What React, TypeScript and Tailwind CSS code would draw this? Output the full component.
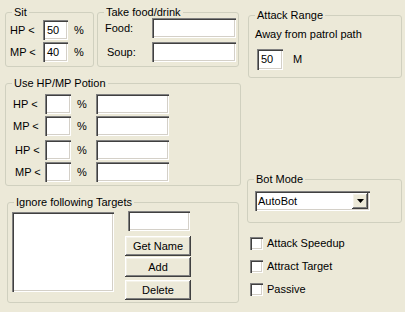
import type { ReactNode } from 'react';
import clsx from 'clsx';

const sunken =
  'bg-white shadow-[inset_1px_1px_0_#808080,inset_2px_2px_0_#404040,inset_-1px_-1px_0_#ffffff,inset_-2px_-2px_0_#d4d0c8]';
const raised =
  'bg-[#ECE9D8] shadow-[inset_-1px_-1px_0_#404040,inset_1px_1px_0_#ffffff,inset_-2px_-2px_0_#808080,inset_2px_2px_0_#f4f2e8]';

const Group = ({
  title,
  className,
  children,
}: {
  title: string;
  className?: string;
  children: ReactNode;
}) => (
  <fieldset
    className={clsx('m-0 p-0 border border-[#D0D0BF] rounded-[3px]', className)}
  >
    <legend className="ml-[6px] px-[2px] leading-[12px]">{title}</legend>
    {children}
  </fieldset>
);

const Input = ({ className, value }: { className: string; value?: string }) => (
  <div className={clsx(sunken, 'pl-[4px] flex items-center', className)}>{value}</div>
);

const Button = ({ label, className }: { label: string; className?: string }) => (
  <div
    className={clsx(
      raised,
      'w-[66px] h-[20px] flex items-center justify-center',
      className
    )}
  >
    {label}
  </div>
);

const potionRows = [
  { label: 'HP <', gap: '', shift: '' },
  { label: 'MP <', gap: 'mt-[2px]', shift: '' },
  { label: 'HP <', gap: 'mt-[4px]', shift: 'pl-[2px]' },
  { label: 'MP <', gap: 'mt-[2px]', shift: 'pl-[2px]' },
];

export default function App() {
  return (
    <div className="w-[405px] h-[312px] overflow-hidden bg-[#ECE9D8] flex font-['Liberation_Sans',Arial,sans-serif] text-[11px] leading-[13px] text-black">
      {/* left column */}
      <div className="w-[241px] shrink-0 flex flex-col">
        <div className="mt-[6px] flex">
          <Group title="Sit" className="ml-[5px] w-[89px] h-[61px]">
            <div className="pl-[4px] pt-[2px] flex flex-col gap-[2px]">
              {[
                ['HP <', '50'],
                ['MP <', '40'],
              ].map(([label, value]) => (
                <div key={label} className="flex items-center h-[20px]">
                  <span className="w-[33px]">{label}</span>
                  <Input className="w-[25px] h-[20px]" value={value} />
                  <span className="ml-[6px]">%</span>
                </div>
              ))}
            </div>
          </Group>

          <Group title="Take food/drink" className="ml-[3px] w-[142px] h-[61px]">
            <div className="pl-[7px] flex flex-col gap-[4px]">
              <div className="flex items-center h-[20px]">
                <span className="w-[47px]">Food:</span>
                <Input className="w-[84px] h-[20px]" />
              </div>
              <div className="flex items-center h-[20px]">
                <span className="ml-[2px] w-[45px]">Soup:</span>
                <Input className="w-[84px] h-[20px]" />
              </div>
            </div>
          </Group>
        </div>

        <Group title="Use HP/MP Potion" className="mt-[10px] ml-[5px] w-[236px] h-[109px]">
          <div className="pl-[7px] pt-[5px] flex flex-col">
            {potionRows.map((row, i) => (
              <div key={i} className={clsx('flex items-center h-[20px]', row.gap)}>
                <span className={clsx('w-[32px]', row.shift)}>{row.label}</span>
                <Input className="w-[26px] h-[20px]" />
                <span className="w-[25px] pl-[6px]">%</span>
                <Input className="w-[73px] h-[20px]" />
              </div>
            ))}
          </div>
        </Group>

        <Group title="Ignore following Targets" className="mt-[10px] ml-[7px] w-[232px] h-[107px]">
          <div className="pl-[4px] pt-[3px] flex items-start">
            <div className={clsx(sunken, 'mt-[1px] w-[102px] h-[80px]')} />
            <div className="ml-[11px] flex flex-col">
              <Input className="ml-[3px] w-[62px] h-[20px]" />
              <Button label="Get Name" className="mt-[5px]" />
              <Button label="Add" className="mt-[1px]" />
              <Button label="Delete" className="mt-[3px]" />
            </div>
          </div>
        </Group>
      </div>

      {/* right column */}
      <div className="flex-1 flex flex-col">
        <Group title="Attack Range" className="mt-[9px] ml-[7px] w-[154px] h-[69px]">
          <div className="pl-[6px] pt-[7px]">
            <div>Away from patrol path</div>
            <div className="mt-[8px] flex items-center">
              <Input className="ml-[2px] w-[26px] h-[21px]" value="50" />
              <span className="ml-[10px]">M</span>
            </div>
          </div>
        </Group>

        <Group title="Bot Mode" className="mt-[95px] ml-[6px] w-[155px] h-[50px]">
          <div className="pl-[7px] pt-[6px]">
            <div className={clsx(sunken, 'w-[115px] h-[20px] flex items-center justify-between')}>
              <span className="pl-[3px]">AutoBot</span>
              <div className={clsx(raised, 'mr-[2px] w-[16px] h-[16px] flex items-center justify-center')}>
                <svg width="7" height="4" viewBox="0 0 7 4">
                  <path d="M0 0h7L3.5 4z" fill="#000" />
                </svg>
              </div>
            </div>
          </div>
        </Group>

        <div className="mt-[14px] ml-[9px] flex flex-col gap-[10px]">
          {['Attack Speedup', 'Attract Target', 'Passive'].map((label) => (
            <div key={label} className="flex items-center h-[13px]">
              <div className={clsx(sunken, 'w-[13px] h-[13px]')} />
              <span className="ml-[4px]">{label}</span>
            </div>
          ))}
        </div>
      </div>
    </div>
  );
}
